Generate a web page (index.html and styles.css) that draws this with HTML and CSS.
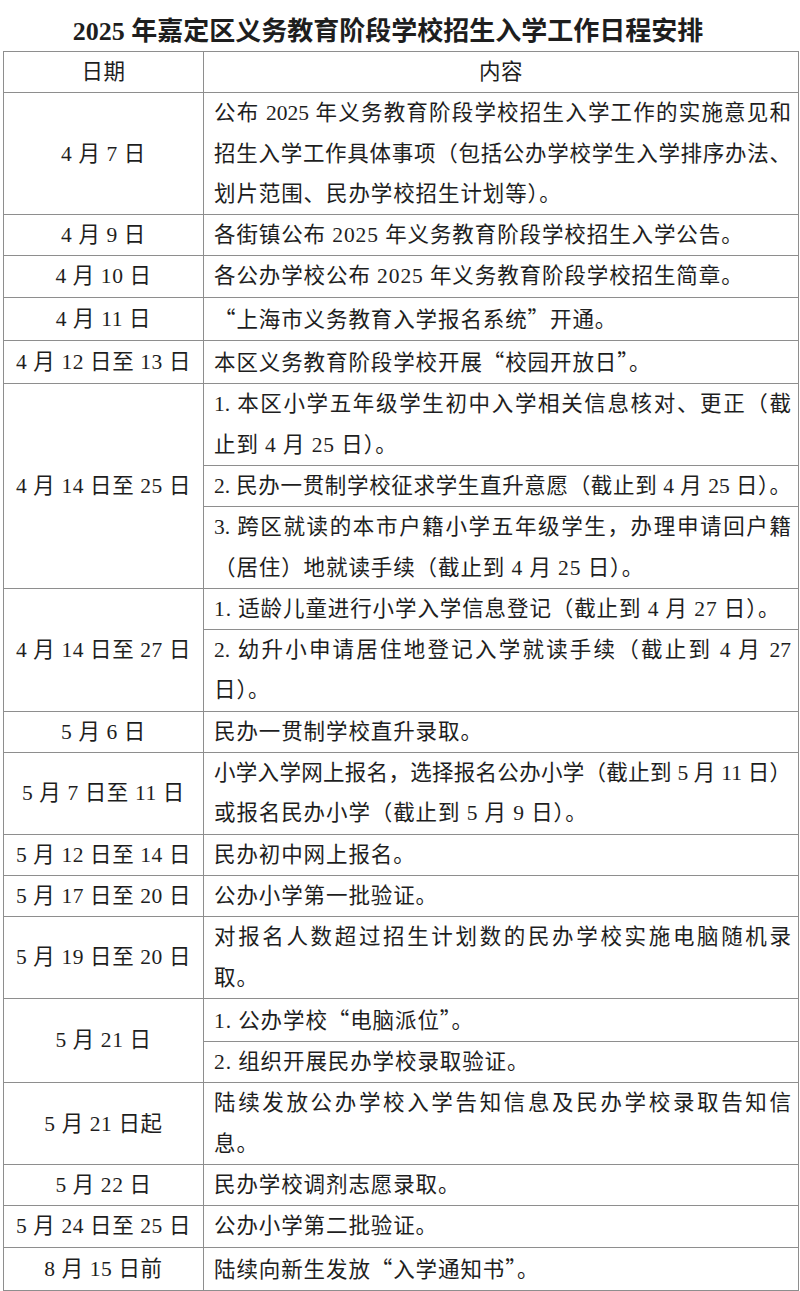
FILE: index.html
```html
<!DOCTYPE html>
<html lang="zh-CN">
<head>
<meta charset="utf-8">
<title>2025年嘉定区义务教育阶段学校招生入学工作日程安排</title>
<link rel="stylesheet" href="styles.css">
</head>
<body>
<h1 class="title">2025 年嘉定区义务教育阶段学校招生入学工作日程安排</h1>
<table class="sched">
  <colgroup><col class="col-date"><col class="col-content"></colgroup>
  <tr><th class="d">日期</th><th class="d">内容</th></tr>
  <tr><td class="d">4 月 7 日</td><td class="c"><span class="ln full">公布 2025 年义务教育阶段学校招生入学工作的实施意见和</span><span class="ln full">招生入学工作具体事项（包括公办学校学生入学排序办法、</span><span class="ln">划片范围、民办学校招生计划等）。</span></td></tr>
  <tr><td class="d">4 月 9 日</td><td class="c"><span class="ln">各街镇公布 2025 年义务教育阶段学校招生入学公告。</span></td></tr>
  <tr><td class="d">4 月 10 日</td><td class="c"><span class="ln">各公办学校公布 2025 年义务教育阶段学校招生简章。</span></td></tr>
  <tr><td class="d">4 月 11 日</td><td class="c"><span class="ln"><span class="q">“</span>上海市义务教育入学报名系统<span class="q">”</span>开通。</span></td></tr>
  <tr><td class="d">4 月 12 日至 13 日</td><td class="c"><span class="ln">本区义务教育阶段学校开展<span class="q">“</span>校园开放日<span class="q">”</span>。</span></td></tr>
  <tr><td class="d" rowspan="3">4 月 14 日至 25 日</td><td class="c"><span class="ln full">1. 本区小学五年级学生初中入学相关信息核对、更正（截</span><span class="ln">止到 4 月 25 日）。</span></td></tr>
  <tr><td class="c"><span class="ln full">2. 民办一贯制学校征求学生直升意愿（截止到 4 月 25 日）。</span></td></tr>
  <tr><td class="c"><span class="ln full">3. 跨区就读的本市户籍小学五年级学生，办理申请回户籍</span><span class="ln">（居住）地就读手续（截止到 4 月 25 日）。</span></td></tr>
  <tr><td class="d" rowspan="2">4 月 14 日至 27 日</td><td class="c"><span class="ln">1. 适龄儿童进行小学入学信息登记（截止到 4 月 27 日）。</span></td></tr>
  <tr><td class="c"><span class="ln full">2. 幼升小申请居住地登记入学就读手续（截止到 4 月 27</span><span class="ln">日）。</span></td></tr>
  <tr><td class="d">5 月 6 日</td><td class="c"><span class="ln">民办一贯制学校直升录取。</span></td></tr>
  <tr><td class="d">5 月 7 日至 11 日</td><td class="c"><span class="ln full">小学入学网上报名，选择报名公办小学（截止到 5 月 11 日）</span><span class="ln">或报名民办小学（截止到 5 月 9 日）。</span></td></tr>
  <tr><td class="d">5 月 12 日至 14 日</td><td class="c"><span class="ln">民办初中网上报名。</span></td></tr>
  <tr><td class="d">5 月 17 日至 20 日</td><td class="c"><span class="ln">公办小学第一批验证。</span></td></tr>
  <tr><td class="d">5 月 19 日至 20 日</td><td class="c"><span class="ln full">对报名人数超过招生计划数的民办学校实施电脑随机录</span><span class="ln">取。</span></td></tr>
  <tr><td class="d" rowspan="2">5 月 21 日</td><td class="c"><span class="ln">1. 公办学校<span class="q">“</span>电脑派位<span class="q">”</span>。</span></td></tr>
  <tr><td class="c"><span class="ln">2. 组织开展民办学校录取验证。</span></td></tr>
  <tr><td class="d">5 月 21 日起</td><td class="c"><span class="ln full">陆续发放公办学校入学告知信息及民办学校录取告知信</span><span class="ln">息。</span></td></tr>
  <tr><td class="d">5 月 22 日</td><td class="c"><span class="ln">民办学校调剂志愿录取。</span></td></tr>
  <tr><td class="d">5 月 24 日至 25 日</td><td class="c"><span class="ln">公办小学第二批验证。</span></td></tr>
  <tr><td class="d">8 月 15 日前</td><td class="c"><span class="ln">陆续向新生发放<span class="q">“</span>入学通知书<span class="q">”</span>。</span></td></tr>
</table>
</body>
</html>
```
FILE: styles.css
```css
html, body {
  margin: 0;
  padding: 0;
  background: #ffffff;
}
body {
  color: #1e1e1e;
  font-family: "Liberation Serif", "Noto Sans CJK SC", serif;
}
.title {
  margin: 0;
  box-sizing: border-box;
  height: 51px;
  padding: 12px 24px 0 0;
  line-height: 39px;
  font-size: 26px;
  font-weight: 600;
  text-align: center;
  letter-spacing: 0;
}
.sched {
  border-collapse: collapse;
  table-layout: fixed;
  width: 796px;
  margin-left: 3px;
}
.col-date { width: 200px; }
.sched th,
.sched td {
  border: 1px solid #8e8e8e;
  padding: 0;
  font-size: 21.5px;
  font-weight: 400;
  line-height: 40.3px;
  letter-spacing: 0.9px;
  vertical-align: middle;
}
.d {
  text-align: center;
  letter-spacing: 0.6px !important;
}
.c {
  padding: 0 7px 0 10px !important;
  text-align: left;
}
.ln {
  display: block;
  white-space: nowrap;
}
.ln.full {
  white-space: normal;
  letter-spacing: 0;
  text-align: justify;
  text-align-last: justify;
}
.q {
  font-family: "Noto Sans CJK SC", sans-serif;
}
```
